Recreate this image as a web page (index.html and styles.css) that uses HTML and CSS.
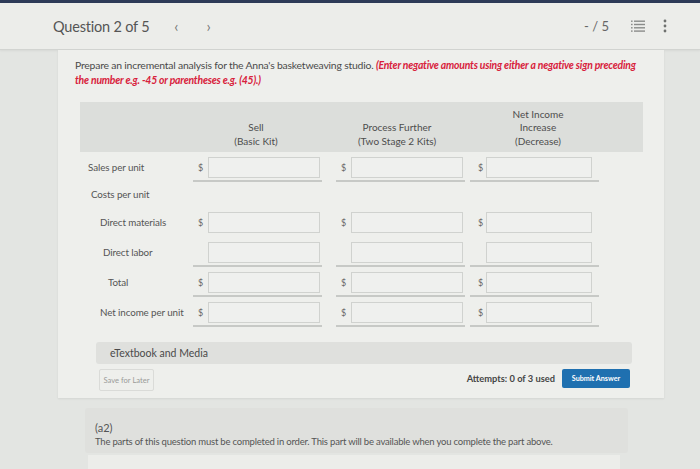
FILE: index.html
```html
<!DOCTYPE html>
<html>
<head>
<meta charset="utf-8">
<link rel="stylesheet" href="styles.css">
</head>
<body>
<div class="topstrip"></div>
<header class="header">
  <div class="qnav">
    <span class="qtitle">Question 2 of 5</span>
    <span class="arrow">&lsaquo;</span>
    <span class="arrow">&rsaquo;</span>
  </div>
  <div class="hright">
    <span class="score">- / 5</span>
    <svg class="listicon" width="14" height="12" viewBox="0 0 14 12"><g fill="#8a8c8a"><rect x="0" y="0.5" width="1.6" height="1.4"/><rect x="3" y="0.5" width="11" height="1.4"/><rect x="0" y="3.8" width="1.6" height="1.4"/><rect x="3" y="3.8" width="11" height="1.4"/><rect x="0" y="7.1" width="1.6" height="1.4"/><rect x="3" y="7.1" width="11" height="1.4"/><rect x="0" y="10.4" width="1.6" height="1.4"/><rect x="3" y="10.4" width="11" height="1.4"/></g></svg>
    <svg class="kebab" width="4" height="14" viewBox="0 0 4 14"><g fill="#6f716f"><circle cx="2" cy="2" r="1.4"/><circle cx="2" cy="7" r="1.4"/><circle cx="2" cy="12" r="1.4"/></g></svg>
  </div>
</header>

<main class="card">
  <p class="prompt">Prepare an incremental analysis for the Anna's basketweaving studio. <em class="hint">(Enter negative amounts using either a negative sign preceding the number e.g. -45 or parentheses e.g. (45).)</em></p>

  <section class="table">
    <div class="thead">
      <div></div>
      <div class="th">Sell<br>(Basic Kit)</div>
      <div class="th">Process Further<br>(Two Stage 2 Kits)</div>
      <div class="th">Net Income<br>Increase<br>(Decrease)</div>
    </div>

    <div class="row">
      <div class="lbl l1">Sales per unit</div>
      <div class="cell c1"><div class="box ul"><span class="dol">$</span><span class="inp"></span></div></div>
      <div class="cell c2"><div class="box ul"><span class="dol">$</span><span class="inp"></span></div></div>
      <div class="cell c3"><div class="box ul"><span class="dol">$</span><span class="inp"></span></div></div>
    </div>

    <div class="row short">
      <div class="lbl l2">Costs per unit</div>
    </div>

    <div class="row">
      <div class="lbl l3">Direct materials</div>
      <div class="cell c1"><div class="box"><span class="dol">$</span><span class="inp"></span></div></div>
      <div class="cell c2"><div class="box"><span class="dol">$</span><span class="inp"></span></div></div>
      <div class="cell c3"><div class="box"><span class="dol">$</span><span class="inp"></span></div></div>
    </div>

    <div class="row">
      <div class="lbl l4">Direct labor</div>
      <div class="cell c1"><div class="box ul"><span class="dol"></span><span class="inp"></span></div></div>
      <div class="cell c2"><div class="box ul"><span class="dol"></span><span class="inp"></span></div></div>
      <div class="cell c3"><div class="box ul"><span class="dol"></span><span class="inp"></span></div></div>
    </div>

    <div class="row">
      <div class="lbl l5">Total</div>
      <div class="cell c1"><div class="box ul"><span class="dol">$</span><span class="inp"></span></div></div>
      <div class="cell c2"><div class="box ul"><span class="dol">$</span><span class="inp"></span></div></div>
      <div class="cell c3"><div class="box ul"><span class="dol">$</span><span class="inp"></span></div></div>
    </div>

    <div class="row">
      <div class="lbl l6">Net income per unit</div>
      <div class="cell c1"><div class="box ul"><span class="dol">$</span><span class="inp"></span></div></div>
      <div class="cell c2"><div class="box ul"><span class="dol">$</span><span class="inp"></span></div></div>
      <div class="cell c3"><div class="box ul"><span class="dol">$</span><span class="inp"></span></div></div>
    </div>
  </section>

  <div class="media">eTextbook and Media</div>

  <div class="actions">
    <button class="save">Save for Later</button>
    <div class="submitwrap">
      <span class="attempts">Attempts: 0 of 3 used</span>
      <button class="submit">Submit Answer</button>
    </div>
  </div>
</main>

<section class="part">
  <div class="ptitle">(a2)</div>
  <div class="ptext">The parts of this question must be completed in order. This part will be available when you complete the part above.</div>
</section>
<div class="nextstrip"></div>
</body>
</html>
```

FILE: styles.css
```css
* { box-sizing: border-box; }
html, body { margin: 0; padding: 0; }
body {
  width: 700px;
  height: 469px;
  overflow: hidden;
  background: #e3e5e2;
  font-family: Lato, "Open Sans", "Liberation Sans", sans-serif;
  color: #444;
}
.topstrip { height: 3px; background: #2e3b58; }
.header {
  height: 47px;
  background: #ecedea;
  border-bottom: 1px solid #d2d4d1;
  box-shadow: 0 1px 2px rgba(0,0,0,0.06);
  display: flex;
  align-items: center;
  justify-content: space-between;
  padding: 0 33px 0 53px;
}
.qnav { display: flex; align-items: center; }
.qtitle { font-size: 14.5px; color: #555; letter-spacing: -0.2px; }
.arrow { font-size: 15px; color: #777; margin-left: 25px; }
.arrow + .arrow { margin-left: 28px; }
.hright { display: flex; align-items: center; }
.score { font-size: 13px; color: #666; }
.listicon { margin-left: 22px; }
.kebab { margin-left: 18px; }

.card {
  margin: 0 36px 0 58px;
  background: #eeefec;
  padding: 8px 0 7px 17px;
  box-shadow: 0 1px 2px rgba(0,0,0,0.07);
}
.prompt {
  margin: 0;
  width: 568px;
  font-size: 10.4px;
  line-height: 15px;
  color: #4a4a4a;
  letter-spacing: -0.2px;
}
.hint { color: #d8213b; font-weight: bold; font-style: italic; }

.table { margin: 14px 0 0 5px; width: 563px; }
.thead {
  display: grid;
  grid-template-columns: 110px 140px 140px 173px;
  height: 50px;
  background: #dcdedb;
  align-items: end;
  padding-bottom: 4px;
}
.th {
  font-size: 10px;
  line-height: 13.5px;
  color: #4d4d4d;
  text-align: center;
}
.thead .th:nth-child(2) { margin-left: -8px; }
.thead .th:nth-child(3) { margin-left: -6px; }
.thead .th:nth-child(4) { width: 140px; margin-left: -2px; }

.row {
  display: grid;
  grid-template-columns: 110px 140px 140px 135px;
  padding-top: 5px;
  height: 30px;
}
.row.short { height: 25px; padding-top: 0; align-items: center; }
.lbl {
  font-size: 9.8px;
  color: #555;
  align-self: start;
  line-height: 21px;
  white-space: nowrap;
  letter-spacing: -0.1px;
}
.l1 { padding-left: 8px; }
.l2 { padding-left: 11px; line-height: 25px; }
.l3 { padding-left: 20px; }
.l4 { padding-left: 23px; }
.l5 { padding-left: 28px; }
.l6 { padding-left: 20px; }

.cell { display: flex; }
.c1 { padding-left: 3px; }
.c2 { padding-left: 6px; }
.c3 { padding-left: 0px; }
.box {
  width: 129px;
  display: flex;
  align-items: center;
  padding-bottom: 2px;
  border-bottom: 2px solid transparent;
}
.box.ul { border-bottom-color: #c7c9c6; }
.dol {
  width: 15px;
  padding-left: 5px;
  font-size: 9px;
  color: #666;
}
.inp {
  width: 112px;
  height: 21px;
  border: 1px solid #d0d2cf;
  background: #eff0ee;
}
.c3 .dol { padding-left: 8px; width: 16px; }
.c3 .inp { width: 106px; }

.media {
  margin: 15px 32px 0 21px;
  height: 22px;
  background: #dfe0dd;
  border-radius: 3px;
  font-size: 10.5px;
  color: #4a4a4a;
  line-height: 22px;
  padding-left: 14px;
}
.actions {
  display: flex;
  justify-content: space-between;
  align-items: center;
  margin: 5px 34px 0 24px;
}
.save {
  font-family: inherit;
  width: 55px;
  height: 22px;
  border: 1px solid #dadbd8;
  border-radius: 2px;
  background: #eeefec;
  font-size: 7.6px;
  color: #9a9b99;
  padding: 0;
}
.submitwrap { display: flex; align-items: center; margin-top: -4px; }
.attempts { font-size: 9.3px; font-weight: bold; color: #454545; }
.submit {
  font-family: inherit;
  margin-left: 7px;
  width: 68px;
  height: 19px;
  border: 0;
  border-radius: 2px;
  background: #1f70b0;
  color: #fff;
  font-size: 7.2px;
  font-weight: bold;
  padding: 0;
}

.part {
  margin: 10px 72px 0 85px;
  height: 45px;
  background: #dfe0dd;
  border-radius: 3px;
  padding: 13px 0 0 10px;
}
.ptitle { font-size: 11px; color: #555; line-height: 14px; }
.ptext { font-size: 9.5px; color: #555; margin-top: 1px; letter-spacing: -0.2px; white-space: nowrap; }
.nextstrip {
  margin: 2px 80px 0 88px;
  height: 20px;
  background: #ecedea;
}
```
